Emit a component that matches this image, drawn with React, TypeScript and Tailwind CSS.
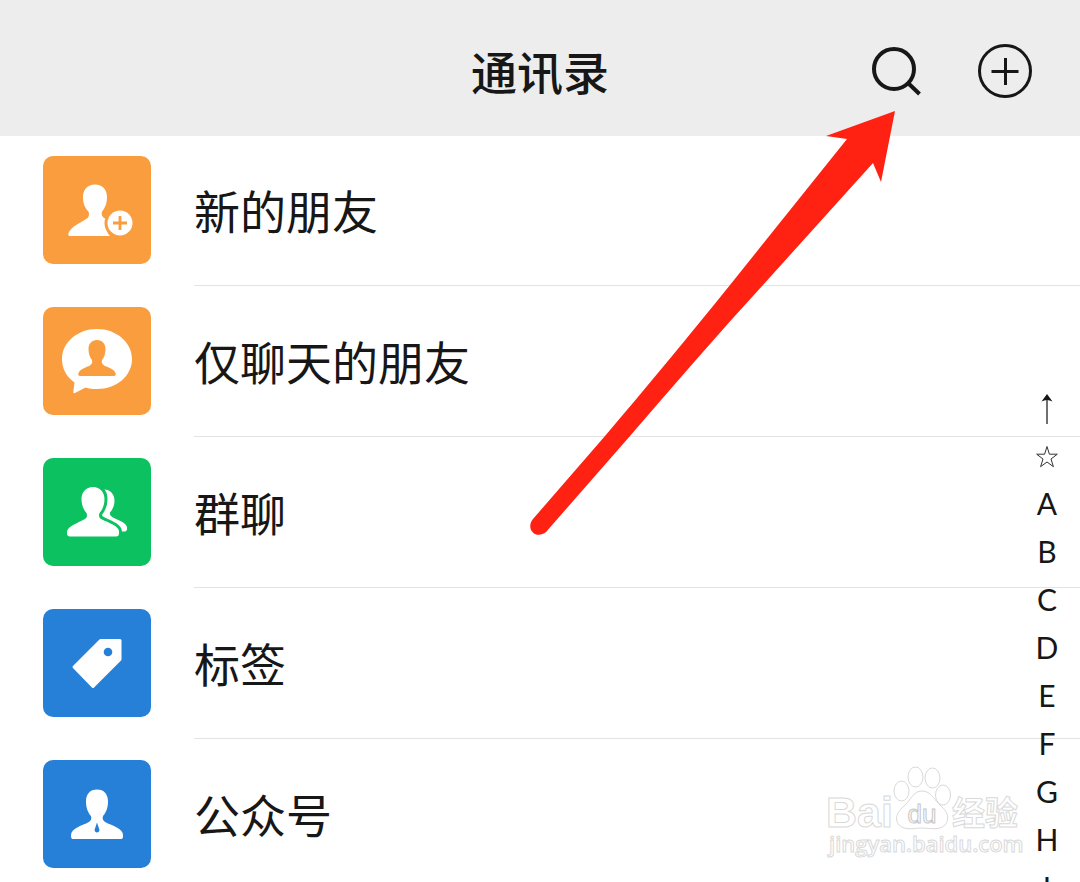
import type { ReactNode } from "react";

type Contact = { label: string; color: string; icon: ReactNode };

const contacts: Contact[] = [
  {
    label: "新的朋友",
    color: "bg-[#fa9d3e]",
    icon: (
      <>
        <path
          fill="#fff"
          d="M52 28.500C59.500 28.500 64 33.500 64 41C64 47.500 62 52 59 55.500C58 58.500 59 61 62 62.500L67 65C63 70 63 76 67 80H27C24.500 80 25 77 27 74.500C31 69 39 66 44 62.500C46 61 46.500 58 45.500 55.500C42 52 40 47.500 40 41C40 33.500 44.500 28.500 52 28.500Z"
        />
        <circle cx="77" cy="67" r="15.500" fill="#fa9d3e" />
        <circle cx="77" cy="67" r="12.500" fill="#fff" />
        <path stroke="#fa9d3e" strokeWidth="2.800" d="M70 67H84M77 60V74" />
      </>
    ),
  },
  {
    label: "仅聊天的朋友",
    color: "bg-[#fa9d3e]",
    icon: (
      <>
        <path
          fill="#fff"
          d="M54 22C73.500 22 89 35.500 89 52C89 69 73.500 82 54 82C49.500 82 46 81.500 42.500 80.500L32 86C31 86.500 30 86 30.300 85L31.500 75.500C23.500 70 19 61.500 19 52C19 35.500 34.500 22 54 22Z"
        />
        <path
          fill="#fa9d3e"
          d="M54 33C59.500 33 62.500 37 62.500 42C62.500 47 61 50.500 59 53C58.500 55.500 59 57 61 58.500C65 60.500 70 61.500 72 65C73.500 67.500 73 69 70.500 69H37.500C35 69 34.500 67.500 36 65C38.500 61.500 43 60.500 47 58.500C49 57 49.500 55.500 49 53C47 50.500 45.500 47 45.500 42C45.500 37 48.500 33 54 33Z"
        />
      </>
    ),
  },
  {
    label: "群聊",
    color: "bg-[#0bc160]",
    icon: (
      <>
        <path
          fill="#fff"
          d="M61 31.500C67 31.500 71.500 36 71.500 42.500C71.500 48 69.500 51.500 67 54.500C66.500 56.500 67.500 58 70 59.500C75 62 83 64.500 84 69C84.500 72 83.500 73.500 81 73.500H76L56 62V40Z"
        />
        <path
          fill="#fff"
          stroke="#0bc160"
          strokeWidth="6"
          paintOrder="stroke"
          d="M50 29C57 29 61.500 34 61.500 41C61.500 47 59.500 51.500 56.500 55C55.500 58 56 60 59 61.500C65 64.500 76 68 76 73.500V75.500C76 77.500 75 78.500 73 78.500H27C25 78.500 24 77.500 24 75.500V73.500C25 68 35 65 41 61.500C44 60 44.500 58 43.500 55C40.500 51.500 38.500 47 38.500 41C38.500 34 43 29 50 29Z"
        />
      </>
    ),
  },
  {
    label: "标签",
    color: "bg-[#2780d8]",
    icon: (
      <>
        <path
          fill="#fff"
          stroke="#fff"
          strokeWidth="3"
          strokeLinejoin="round"
          d="M57.500 31.500H77V50.500L50 77.500L31 58Z"
        />
        <circle cx="65" cy="43" r="4.300" fill="#2780d8" />
      </>
    ),
  },
  {
    label: "公众号",
    color: "bg-[#2780d8]",
    icon: (
      <>
        <path
          fill="#fff"
          d="M54 29.500C61 29.500 65 34 65 41.500C65 48 63 52.500 60 56C59 59 60 61 63 62.500C69 65.500 80 68.500 80 75V76.500C80 78.500 79 79 77.500 79H30.500C29 79 28 78.500 28 76.500V75C28 68.500 39 65.500 45 62.500C48 61 49 59 48 56C45 52.500 43 48 43 41.500C43 34 47 29.500 54 29.500Z"
        />
        <path fill="#2780d8" d="M54 62.500L56.500 70Q56 72.500 54 72.500Q52 72.500 51.500 70Z" />
      </>
    ),
  },
];

const letters = ["A", "B", "C", "D", "E", "F", "G", "H", "I"];

function Header() {
  return (
    <header className="relative z-10 grid h-34 grid-cols-[1fr_auto_1fr] items-center bg-[#ededed] pt-3">
      <span />
      <h1 className="pb-2 text-[46px] leading-none font-medium">通讯录</h1>
      <div className="flex justify-end gap-[45px] pr-[43px]">
        <button type="button" aria-label="搜索" className="size-16">
          <svg viewBox="0 0 64 64" fill="none" stroke="#171717" className="size-16">
            <circle cx="30" cy="27" r="20" strokeWidth="4" />
            <path strokeWidth="4" d="M43.500 40.500L55.500 52" />
          </svg>
        </button>
        <button type="button" aria-label="添加" className="size-16">
          <svg viewBox="0 0 64 64" fill="none" stroke="#171717" className="size-16">
            <circle cx="32" cy="29" r="25.500" strokeWidth="3" />
            <path strokeWidth="3" d="M18.500 29.500H45.500M32.500 16V43" />
          </svg>
        </button>
      </div>
    </header>
  );
}

function ContactRow({ label, color, icon }: Contact) {
  return (
    <li>
      <a href="#" className="flex h-[151px] pl-[43px]">
        <span className={`mt-[21px] size-[108px] shrink-0 rounded-[10px] ${color}`}>
          <svg viewBox="0 0 108 108" fill="none" className="size-full">
            {icon}
          </svg>
        </span>
        <span className="ml-[43px] flex flex-1 items-center border-b border-[#e3e3e3] pb-0.5 text-[46px] leading-none">
          {label}
        </span>
      </a>
    </li>
  );
}

function LetterIndex() {
  return (
    <nav
      aria-label="索引"
      className="absolute top-[385px] right-3 flex w-[42px] flex-col text-[30px] leading-10 [font-family:Lato,sans-serif]"
    >
      <a href="#" aria-label="顶部" className="flex h-12 items-center justify-center">
        <svg viewBox="0 0 24 32" className="h-8 w-6">
          <path stroke="#333" strokeWidth="1.400" d="M12 5V31" />
          <path fill="#171717" d="M12 1L17.500 8.500Q12 5.500 6.500 8.500Z" />
        </svg>
      </a>
      <a href="#" aria-label="星标" className="flex h-12 items-center justify-center">
        <svg viewBox="0 0 24 24" fill="none" stroke="#333" className="size-6">
          <path d="M12 1.500L14.400 9.200H22.300L16 14L18.400 21.700L12 17L5.600 21.700L8 14L1.700 9.200H9.600Z" />
        </svg>
      </a>
      {letters.map((letter) => (
        <a key={letter} href="#" className="flex h-12 items-center justify-center pb-1">
          {letter}
        </a>
      ))}
    </nav>
  );
}

function Watermark() {
  return (
    <svg
      viewBox="0 0 200 100"
      fill="#fff"
      stroke="#d9d9d9"
      className="pointer-events-none absolute top-[762px] right-[54px] h-[100px] w-[200px]"
    >
      <text x="0" y="65" fontSize="43" fontWeight="700" className="[font-family:'Liberation_Sans',sans-serif]">
        Bai
      </text>
      <ellipse cx="75.500" cy="29" rx="7.500" ry="10" />
      <ellipse cx="89.500" cy="15" rx="7.500" ry="10" />
      <ellipse cx="106.500" cy="16" rx="7.500" ry="10" />
      <ellipse cx="117" cy="33" rx="7.500" ry="10" />
      <path d="M96 29C105 29 108 38 115 44C122 50 124 57 119 63C113 69 103 66 96 66C89 66 79 69 73 63C68 57 71 50 78 44C85 38 87 29 96 29Z" />
      <text
        x="96"
        y="61"
        fontSize="26"
        textAnchor="middle"
        stroke="#c6c6c6"
        className="[font-family:'Liberation_Sans',sans-serif]"
      >
        du
      </text>
      <text x="126" y="63" fontSize="33" fontWeight="700" className="[font-family:'Noto_Sans_CJK_SC',sans-serif]">
        经验
      </text>
      <text x="3" y="90" fontSize="22" fontWeight="600" className="[font-family:'Open_Sans',sans-serif]">
        jingyan.baidu.com
      </text>
    </svg>
  );
}

function PointerArrow() {
  return (
    <svg
      aria-hidden="true"
      viewBox="0 0 370 430"
      className="pointer-events-none absolute top-[108px] right-[182px] z-20 h-[430px] w-[370px]"
    >
      <path
        fill="#ff2112"
        d="M367 3L298 28L319 31L202 177C160 229 118 280 77 328L5 411C-3 421 8 432 18 424L102 328C146 277 190 226 235 177L345 55L353 74Z"
      />
    </svg>
  );
}

export default function App() {
  return (
    <div className="relative h-screen overflow-hidden bg-white text-[#171717] [font-family:'Noto_Sans_CJK_SC',sans-serif]">
      <Header />
      <main className="-mt-px">
        <ul>
          {contacts.map((contact) => (
            <ContactRow key={contact.label} {...contact} />
          ))}
        </ul>
      </main>
      <Watermark />
      <LetterIndex />
      <PointerArrow />
    </div>
  );
}
